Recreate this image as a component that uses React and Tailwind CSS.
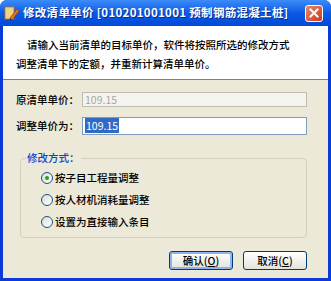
import React from 'react';

const font = { fontFamily: '"SimSun", "Noto Sans CJK SC", sans-serif' };

const TitleIcon = () => (
  <svg width="16" height="16" viewBox="0 0 16 16" className="shrink-0">
    <rect x="1" y="2" width="9" height="12" fill="#f4d27a" stroke="#b07a20" strokeWidth="0.8" />
    <path d="M6 13 L13 4 L15 6 L8 15 Z" fill="#e8742a" stroke="#8a3a10" strokeWidth="0.7" />
    <path d="M6 13 L8 15 L5.5 15.5 Z" fill="#333" />
  </svg>
);

const Radio = ({ checked, label }) => (
  <label className="flex items-center gap-[2px] h-[22px] text-[10.5px] text-black whitespace-nowrap">
    <span className="w-[12px] h-[12px] rounded-full border border-[#1c5180] bg-gradient-to-br from-[#dcdcd5] to-white flex items-center justify-center">
      {checked && <span className="w-[4px] h-[4px] rounded-full bg-[#21a121]" />}
    </span>
    <span>{label}</span>
  </label>
);

const XpButton = ({ children, focused }) => (
  <button
    className={`w-[64px] h-[19px] rounded-[3px] border border-[#003c74] bg-gradient-to-b from-white to-[#e3e3db] text-[10.5px] text-black flex items-center justify-center whitespace-nowrap ${focused ? 'shadow-[inset_0_0_0_2px_#8fb4ea]' : ''}`}
  >
    {children}
  </button>
);

export default function App() {
  return (
    <div className="w-[331px] h-[281px] flex flex-col bg-[#0a3bd8] rounded-t-[7px] overflow-hidden font-medium" style={font}>
      {/* title bar */}
      <div className="h-[26px] shrink-0 flex items-center pl-[4px] pr-[8px] bg-gradient-to-b from-[#3b8cf9] via-[#0a5ae6] to-[#0349d8]">
        <TitleIcon />
        <span className="ml-[3px] min-w-0 text-white font-bold text-[11.5px] tracking-[0.3px] whitespace-nowrap [text-shadow:1px_1px_0_#0a2a8a]">
          修改清单单价 [010201001001 预制钢筋混凝土桩]
        </span>
        <div className="ml-auto shrink-0 w-[18px] h-[17px] rounded-[3px] border border-white bg-gradient-to-br from-[#e8856a] to-[#c93a14] flex items-center justify-center">
          <svg width="10" height="10" viewBox="0 0 10 10">
            <path d="M1.5 1.5 L8.5 8.5 M8.5 1.5 L1.5 8.5" stroke="white" strokeWidth="2" strokeLinecap="square" />
          </svg>
        </div>
      </div>

      <div className="flex-1 mx-[3px] mb-[3px] flex flex-col bg-[#ece9d8]">
        {/* info panel */}
        <div className="h-[54px] bg-white border-b border-[#808080] text-[10.5px] text-black leading-[19px] pt-[9px] pl-[13px] whitespace-nowrap">
          <div className="pl-[11px]">请输入当前清单的目标单价，软件将按照所选的修改方式</div>
          <div>调整清单下的定额，并重新计算清单单价。</div>
        </div>

        <div className="pl-[13px] pr-[21px] pt-[12px] flex flex-col text-[10.5px] text-black">
          <div className="flex items-center h-[15px]">
            <span className="w-[66px] shrink-0 whitespace-nowrap">原清单单价：</span>
            <div className="flex-1 h-[15px] border border-[#bdbab0] bg-[#f5f4ef] text-[#a7a6a0] text-[10.5px] leading-[13px] pl-[2px] font-normal">
              109.15
            </div>
          </div>
          <div className="flex items-center h-[18px] mt-[10px]">
            <span className="w-[66px] shrink-0 whitespace-nowrap">调整单价为：</span>
            <div className="flex-1 h-[18px] border border-[#7f9db9] bg-white text-[10.5px] leading-[16px] pl-[2px] font-normal">
              <span className="bg-[#316ac5] text-white px-[1px]">109.15</span>
            </div>
          </div>

          {/* group box */}
          <div className="relative mt-[23px] ml-[4px] h-[80px] border border-[#d0d0bf] rounded-[4px] pt-[8px] pl-[20px]">
            <span className="absolute -top-[8px] left-[5px] px-[1px] bg-[#ece9d8] text-[#0046d5] text-[10.5px] leading-[14px] whitespace-nowrap">修改方式：</span>
            <Radio checked label="按子目工程量调整" />
            <Radio label="按人材机消耗量调整" />
            <Radio label="设置为直接输入条目" />
          </div>

          <div className="flex justify-end gap-[10px] mt-[13px]">
            <XpButton focused>确认(<u>O</u>)</XpButton>
            <XpButton>取消(<u>C</u>)</XpButton>
          </div>
        </div>
      </div>
    </div>
  );
}
